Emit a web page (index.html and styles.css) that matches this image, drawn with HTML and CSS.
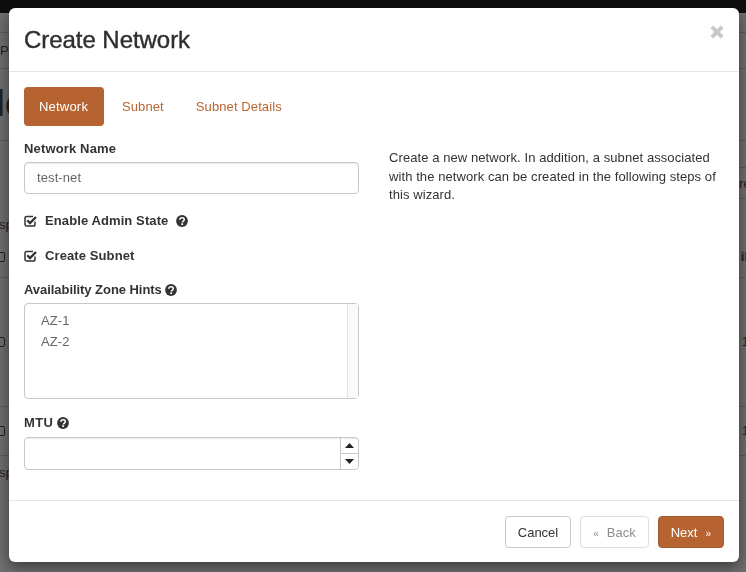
FILE: index.html
```html
<!DOCTYPE html>
<html lang="en">
<head>
<meta charset="utf-8">
<title>Create Network</title>
<link rel="stylesheet" href="styles.css">
</head>
<body>
<svg class="sprite" width="0" height="0" aria-hidden="true">
  <symbol id="help" viewBox="0 0 12 12">
    <circle cx="6" cy="6" r="5.9" fill="#333"/>
    <path d="M3.800 4.700C3.900 3.400 4.900 2.700 6 2.700c1.300 0 2.300.8 2.300 1.900 0 1.700-2.100 1.600-2.100 3" fill="none" stroke="#fff" stroke-width="1.500"/>
    <rect x="5.300" y="8.300" width="1.800" height="1.700" fill="#fff"/>
  </symbol>
  <symbol id="checked" viewBox="0 0 13 13">
    <path d="M11 7.500v2.700c0 1-.7 1.800-1.700 1.800H2.700C1.700 12 1 11.200 1 10.200V4.300C1 3.300 1.700 2.500 2.700 2.500H9" fill="none" stroke="#333" stroke-width="1.500"/>
    <path d="M3.300 6.300l2.700 2.800L12 3" fill="none" stroke="#333" stroke-width="2.300"/>
  </symbol>
</svg>

<div class="backdrop">
  <div class="bg-top"></div>
  <div class="bg-row bg-r1"></div>
  <div class="bg-row bg-r2"><span>Pr</span></div>
  <div class="bg-row bg-r3"><span class="bg-big">le</span></div>
  <div class="bg-row bg-plain bg-r4"><span></span><span class="bg-cell"></span></div>
  <div class="bg-row bg-plain bg-r5"><span></span><span class="bg-cell">re</span></div>
  <div class="bg-row bg-plain bg-r6"><span class="bg-clip">sp</span></div>
  <div class="bg-row bg-r7"><span class="bg-box"></span><span class="bg-bold">il</span></div>
  <div class="bg-row bg-r8"><span class="bg-box"></span><span class="bg-num">1</span></div>
  <div class="bg-row bg-r9"><span class="bg-box"></span><span class="bg-num">1</span></div>
  <div class="bg-row bg-plain bg-r10"><span class="bg-clip">sp</span></div>
</div>

<div class="modal" role="dialog">
  <header class="modal-header">
    <h1>Create Network</h1>
    <svg class="close" viewBox="0 0 14 14" aria-label="Close"><path d="M2.500 2.500l9 9M11.500 2.500l-9 9" stroke="#c9c9c9" stroke-width="3.600" fill="none"/></svg>
  </header>

  <div class="modal-body">
    <nav class="tabs">
      <a class="tab active">Network</a>
      <a class="tab">Subnet</a>
      <a class="tab">Subnet Details</a>
    </nav>
    <div class="columns">
      <form class="form">
        <div class="field field-name">
          <label>Network Name</label>
          <div class="input">test-net</div>
        </div>
        <div class="check check-first">
          <svg class="check-icon"><use href="#checked"/></svg>
          <span>Enable Admin State</span>
          <svg class="help help-wide"><use href="#help"/></svg>
        </div>
        <div class="check check-second">
          <svg class="check-icon"><use href="#checked"/></svg>
          <span>Create Subnet</span>
        </div>
        <div class="field field-az">
          <label>Availability Zone Hints <svg class="help"><use href="#help"/></svg></label>
          <div class="listbox">
            <div class="options">
              <div>AZ-1</div>
              <div>AZ-2</div>
            </div>
            <div class="scrollbar"></div>
          </div>
        </div>
        <div class="field field-mtu">
          <label>MTU <svg class="help"><use href="#help"/></svg></label>
          <div class="number">
            <div class="number-value"></div>
            <div class="spinner">
              <div class="spin"><svg viewBox="0 0 9 5"><path d="M4.500 0L9 5H0z" fill="#222"/></svg></div>
              <div class="spin"><svg viewBox="0 0 9 5"><path d="M4.500 5L9 0H0z" fill="#222"/></svg></div>
            </div>
          </div>
        </div>
      </form>
      <p class="help-text">Create a new network. In addition, a subnet associated with the network can be created in the following steps of this wizard.</p>
    </div>
  </div>

  <footer class="modal-footer">
    <button class="btn" type="button">Cancel</button>
    <button class="btn btn-disabled" type="button"><span class="quote">«</span>Back</button>
    <button class="btn btn-primary" type="button">Next<span class="quote quote-after">»</span></button>
  </footer>
</div>
</body>
</html>
```

FILE: styles.css
```css
* { box-sizing: border-box; }

html, body {
  margin: 0;
  height: 100%;
  overflow: hidden;
}

body {
  background: #707070;
  color: #333;
  font-family: "Liberation Sans", Arial, sans-serif;
  font-size: 13px;
  line-height: 18.5px;
}

.sprite { display: block; height: 0; }

/* page dimmed behind the dialog */
.backdrop {
  height: 572px;
  color: #222;
}
.bg-top { height: 13px; background: #0e0e0e; }
.bg-row {
  display: flex;
  justify-content: space-between;
  align-items: center;
  border-bottom: 1px solid #5e5e5e;
}
.bg-plain { border-bottom: 0; }
.bg-r1 { height: 20px; }
.bg-r2 { height: 36px; padding-top: 2px; }
.bg-r3 { height: 72px; }
.bg-big { font-size: 36px; font-weight: 700; margin-left: -5px; }
.bg-r4 { height: 27px; }
.bg-r5 { height: 31px; }
.bg-cell {
  display: block;
  width: 30px;
  height: 100%;
  margin-right: -5px;
  padding-top: 7px;
  padding-left: 18px;
  border-bottom: 1px solid #5e5e5e;
}
.bg-r6 { height: 38px; padding-top: 14px; }
.bg-clip { margin-left: -1px; }
.bg-r7 { height: 41px; }
.bg-bold { font-weight: 700; margin-right: -2px; }
.bg-r8 { height: 129px; }
.bg-r9 { height: 49px; }
.bg-num { margin-right: -3px; }
.bg-r10 { height: 34px; }
.bg-box {
  width: 10px;
  height: 10px;
  margin-left: -5px;
  border: 1px solid #222;
  border-radius: 2px;
}

/* dialog */
.modal {
  position: fixed;
  left: 9px;
  top: 8px;
  width: 730px;
  height: 554px;
  display: flex;
  flex-direction: column;
  background: #fff;
  border-radius: 6px;
  box-shadow: 0 5px 15px rgba(0, 0, 0, .5);
}

.modal-header {
  height: 64px;
  flex: none;
  display: flex;
  justify-content: space-between;
  padding: 15px;
  border-bottom: 1px solid #e5e5e5;
}
.modal-header h1 {
  margin: 0;
  font-size: 24px;
  font-weight: 400;
  line-height: 33px;
  letter-spacing: -.05px;
  color: #2f2f2f;
  -webkit-text-stroke: .4px #2f2f2f;
}
.close {
  width: 16px;
  height: 16px;
  margin: 1px -1px 0 0;
}

.modal-body {
  flex: 1;
  padding: 15px;
}

.tabs {
  display: flex;
  height: 39px;
}
.tab {
  display: flex;
  align-items: center;
  padding: 2px 15px 0;
  border-radius: 4px;
  color: #b8652f;
  font-size: 13px;
  letter-spacing: .1px;
}
.tab:nth-child(2) { padding: 2px 17px 0 18px; }
.tab.active {
  width: 80px;
  background: #b66331;
  color: #fff;
  letter-spacing: .2px;
}

.columns {
  display: grid;
  grid-template-columns: 335px 1fr;
  column-gap: 30px;
}

label {
  display: block;
  font-weight: 700;
  line-height: 18px;
  letter-spacing: .15px;
  color: #333;
}

.field-name { margin-top: 14px; }
.input {
  height: 32px;
  margin-top: 4px;
  padding: 0 12px;
  border: 1px solid #c8c8c8;
  border-radius: 4px;
  box-shadow: inset 0 1px 1px rgba(0, 0, 0, .075);
  color: #666;
  line-height: 30px;
  letter-spacing: .1px;
}

.check {
  display: flex;
  align-items: center;
  height: 18px;
  font-weight: 700;
  letter-spacing: .1px;
}
.check-first { margin-top: 18px; }
.check-second { margin-top: 17px; }
.check-icon {
  width: 13px;
  height: 13px;
  margin-right: 8px;
  margin-top: -1px;
}
.help {
  width: 12px;
  height: 12px;
  vertical-align: -2px;
}
.help-wide { margin-left: 8px; }

.field-az { margin-top: 16px; }
.field-az label { letter-spacing: -.05px; }
.listbox {
  display: flex;
  height: 96px;
  margin-top: 4px;
  border: 1px solid #c8c8c8;
  border-radius: 4px;
  color: #666;
}
.options {
  flex: 1;
  padding: 6px 16px;
  line-height: 21px;
  letter-spacing: .1px;
}
.scrollbar {
  width: 11px;
  border-left: 1px solid #e3e3e3;
  background: #fafafa;
}

.field-mtu { margin-top: 15px; }
.field-mtu label { letter-spacing: .4px; }
.number {
  display: flex;
  height: 33px;
  margin-top: 5px;
  border: 1px solid #c8c8c8;
  border-radius: 4px;
  box-shadow: inset 0 1px 1px rgba(0, 0, 0, .075);
}
.number-value { flex: 1; }
.spinner {
  width: 18px;
  display: flex;
  flex-direction: column;
  border-left: 1px solid #c8c8c8;
}
.spin {
  flex: 1;
  display: flex;
  align-items: center;
  justify-content: center;
}
.spin:first-child { border-bottom: 1px solid #c8c8c8; }
.spin svg { width: 9px; height: 5px; }

.help-text {
  margin: 23px 0 0;
  color: #333;
  letter-spacing: .08px;
}

.modal-footer {
  height: 62px;
  flex: none;
  display: flex;
  justify-content: flex-end;
  align-items: flex-start;
  gap: 9px;
  padding: 15px;
  border-top: 1px solid #e5e5e5;
}
.btn {
  height: 32px;
  padding: 0 12px;
  background: #fff;
  border: 1px solid #c8c8c8;
  border-radius: 4px;
  color: #333;
  font-family: inherit;
  font-size: 13px;
}
.btn-disabled {
  border-color: #e0e0e0;
  color: #8e8e8e;
}
.btn-primary {
  background: #b66331;
  border-color: #a85c2d;
  color: #fff;
}
.quote { font-size: 10px; margin-right: 8px; }
.quote-after { margin: 0 0 0 8px; }
```
